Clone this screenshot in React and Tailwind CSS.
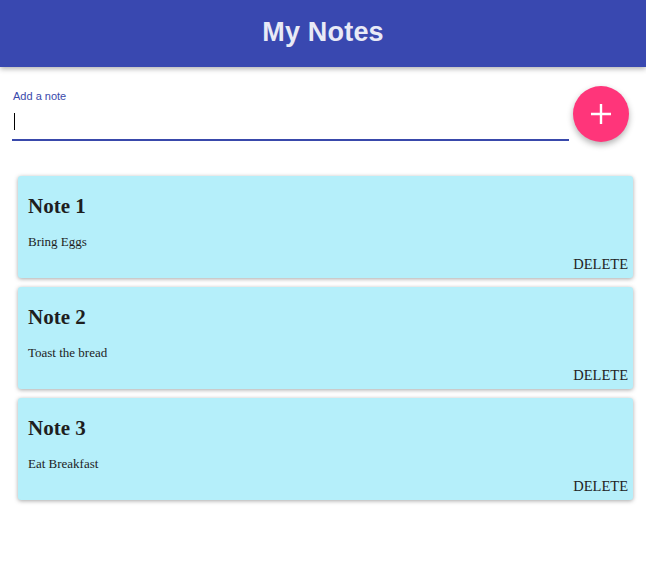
// App.jsx
const NOTES = [
  { id: 1, title: 'Note 1', body: 'Bring Eggs' },
  { id: 2, title: 'Note 2', body: 'Toast the bread' },
  { id: 3, title: 'Note 3', body: 'Eat Breakfast' },
];

const NoteCard = ({ note }) => (
  <div className="h-[102px] rounded-[3px] bg-[#b5effa] shadow-[0_1px_4px_rgba(0,0,0,0.35)] pl-[10px] pr-[5px] pt-[18px] pb-[5px] text-[#1e1e1e] font-['Liberation_Serif',serif]">
    <h2 className="text-[21px] leading-[24px] font-bold">{note.title}</h2>
    <p className="mt-[15px] text-[13px] leading-[18px]">{note.body}</p>
    <div className="mt-[4px] flex justify-end">
      <button className="text-[14.5px] leading-[18px] uppercase text-[#222]">Delete</button>
    </div>
  </div>
);

export default function App() {
  return (
    <div className="min-h-screen bg-white font-['Liberation_Sans',sans-serif]">
      {/* Header */}
      <header className="h-[67px] bg-[#3948b0] flex items-center justify-center pb-[3px] shadow-[0_2px_5px_rgba(0,0,0,0.3)]">
        <h1 className="text-[27px] font-bold text-[#e8eaf6] tracking-[0.2px]">My Notes</h1>
      </header>

      {/* Input row */}
      <div className="flex items-start pl-[12px] pr-[17px] pt-[19px]">
        <div className="flex-1 pt-[3px]">
          <label className="block pl-[1px] text-[11px] leading-[14px] text-[#3949ab]">Add a note</label>
          <div className="h-[38px] flex items-center pl-[2px] border-b-2 border-[#3949ab]">
            <span className="block w-px h-[17px] bg-black" />
          </div>
        </div>
        <button className="ml-[4px] w-[56px] h-[56px] rounded-full bg-[#ff357a] flex items-center justify-center shadow-[0_3px_6px_rgba(0,0,0,0.3)]">
          <svg width="22" height="22" viewBox="0 0 22 22">
            <path d="M11 1v20M1 11h20" stroke="white" strokeWidth="2.4" />
          </svg>
        </button>
      </div>

      {/* Notes */}
      <div className="mt-[34px] ml-[18px] mr-[13px] flex flex-col gap-[9px]">
        {NOTES.map((n) => (
          <NoteCard key={n.id} note={n} />
        ))}
      </div>
    </div>
  );
}
